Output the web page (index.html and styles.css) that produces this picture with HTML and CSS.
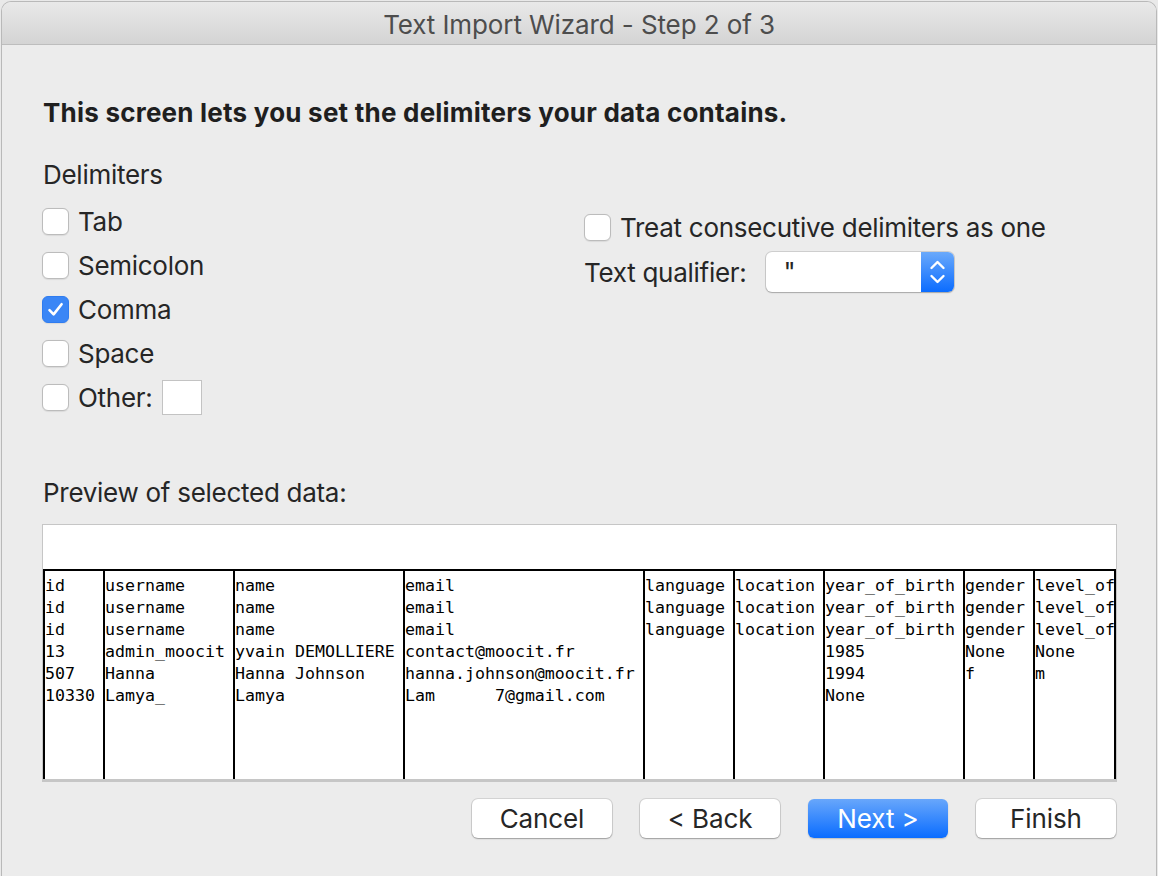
FILE: index.html
```html
<!DOCTYPE html>
<html lang="en">
<head>
<meta charset="utf-8">
<title>Text Import Wizard - Step 2 of 3</title>
<link rel="stylesheet" href="styles.css">
</head>
<body>
<div class="window">
  <div class="titlebar">Text Import Wizard - Step 2 of 3</div>
  <div class="content">
    <h1 class="heading">This screen lets you set the delimiters your data contains.</h1>
    <div class="section-label">Delimiters</div>
    <div class="options">
      <div class="left-col">
        <label class="check-row"><span class="box"></span><span>Tab</span></label>
        <label class="check-row"><span class="box"></span><span>Semicolon</span></label>
        <label class="check-row"><span class="box checked"><svg viewBox="0 0 27 27" width="27" height="27"><path d="M7.5 14.2 L11.6 18.4 L19.6 8.2" fill="none" stroke="#fff" stroke-width="2.6" stroke-linecap="round" stroke-linejoin="round"/></svg></span><span>Comma</span></label>
        <label class="check-row"><span class="box"></span><span>Space</span></label>
        <label class="check-row"><span class="box"></span><span>Other:</span><span class="other-field"></span></label>
      </div>
      <div class="right-col">
        <label class="check-row"><span class="box"></span><span>Treat consecutive delimiters as one</span></label>
        <div class="qualifier-row">
          <span>Text qualifier:</span>
          <div class="select">
            <span class="select-value">"</span>
            <span class="stepper"><svg viewBox="0 0 33 40" width="33" height="40"><path d="M10.5 16 L16.5 10 L22.5 16" fill="none" stroke="#fff" stroke-width="2.4" stroke-linecap="round" stroke-linejoin="round"/><path d="M10.5 24 L16.5 30 L22.5 24" fill="none" stroke="#fff" stroke-width="2.4" stroke-linecap="round" stroke-linejoin="round"/></svg></span>
          </div>
        </div>
      </div>
    </div>
    <div class="section-label preview-label">Preview of selected data:</div>
    <div class="preview">
      <div class="preview-head"></div>
      <div class="grid">
        <div class="col w6">id
id
id
13
507
10330</div>
        <div class="col w13">username
username
username
admin_moocit
Hanna
Lamya_</div>
        <div class="col w17">name
name
name
yvain DEMOLLIERE
Hanna Johnson
Lamya</div>
        <div class="col w24">email
email
email
contact@moocit.fr
hanna.johnson@moocit.fr
Lam      7@gmail.com</div>
        <div class="col w9">language
language
language</div>
        <div class="col w9">location
location
location</div>
        <div class="col w14">year_of_birth
year_of_birth
year_of_birth
1985
1994
None</div>
        <div class="col w7">gender
gender
gender
None
f</div>
        <div class="col w9">level_of
level_of
level_of
None
m</div>
      </div>
    </div>
    <div class="buttons">
      <button class="btn">Cancel</button>
      <button class="btn">&lt; Back</button>
      <button class="btn primary">Next &gt;</button>
      <button class="btn">Finish</button>
    </div>
  </div>
</div>
</body>
</html>
```
FILE: styles.css
```css
* { box-sizing: border-box; }
html, body { margin: 0; padding: 0; }
body {
  background: #e9e9e9;
  font-family: Inter, "Liberation Sans", sans-serif;
  color: #262626;
  width: 1158px;
  height: 876px;
  overflow: hidden;
}
.window {
  margin: 1px 1px 0 1px;
  height: 875px;
  border: 1px solid #b9b9b9;
  border-bottom: none;
  border-radius: 10px 10px 0 0;
  background: #ececec;
  overflow: hidden;
}
.titlebar {
  height: 43px;
  border-bottom: 1px solid #bdbdbd;
  background: linear-gradient(#e9e9e9, #d4d4d4);
  text-align: center;
  font-size: 26px;
  line-height: 46px;
  color: #4d4d4d;
  letter-spacing: -0.1px;
}
.content {
  padding: 0 39px 0 41px;
  letter-spacing: -0.28px;
}
.heading {
  margin: 52px 0 0 0;
  font-size: 26px;
  line-height: 32px;
  font-weight: 700;
  color: #1f1f1f;
  letter-spacing: 0.22px;
}
.section-label {
  margin-top: 30px;
  font-size: 26px;
  line-height: 32px;
}
.options {
  display: flex;
  margin-top: 8px;
}
.left-col {
  width: 542px;
  margin-left: -1px;
  display: flex;
  flex-direction: column;
}
.right-col {
  padding-top: 6px;
  display: flex;
  flex-direction: column;
}
.check-row {
  height: 44px;
  display: flex;
  align-items: center;
  gap: 9px;
  font-size: 26px;
}
.box {
  width: 27px;
  height: 27px;
  border: 1px solid #bcbcbc;
  border-radius: 6px;
  background: #fff;
  box-shadow: 0 0.5px 1px rgba(0,0,0,0.08);
  flex: none;
  display: block;
}
.box.checked {
  background: #3a86f6;
  border-color: #2f7cf0;
}
.box svg { display: block; margin: -1px; }
.other-field {
  width: 40px;
  height: 35px;
  border: 1px solid #c3c3c3;
  background: #fff;
}
.qualifier-row {
  margin-top: 3px;
  height: 40px;
  display: flex;
  align-items: center;
  font-size: 26px;
}
.select {
  margin-left: 19px;
  width: 188px;
  height: 40px;
  border-radius: 6px;
  background: #fff;
  box-shadow: 0 0 0 1px rgba(0,0,0,0.12), 0 1px 1.5px rgba(0,0,0,0.2);
  display: flex;
  overflow: hidden;
}
.select-value {
  flex: 1;
  padding-left: 18px;
  font-size: 26px;
  line-height: 40px;
}
.stepper {
  width: 33px;
  height: 40px;
  background: linear-gradient(#6aa9fb, #0b6cff);
  display: block;
}
.stepper svg { display: block; }
.preview-label {
  margin-top: 58px;
}
.preview {
  margin-top: 15px;
  margin-left: -1px;
  height: 258px;
  border: 1px solid #c6c6c6;
  border-bottom-width: 3px;
  background: #fff;
  display: flex;
  flex-direction: column;
  letter-spacing: 0;
}
.preview-head {
  height: 46px;
  border-bottom: 2px solid #000;
}
.grid {
  flex: 1;
  display: flex;
  overflow: hidden;
  border-right: 2px solid #000;
  font-family: "DejaVu Sans Mono", "Liberation Mono", monospace;
  font-size: 16.6px;
  line-height: 22px;
  color: #000;
}
.col {
  flex: none;
  border-left: 2px solid #000;
  padding-top: 4px;
  white-space: pre;
  overflow: hidden;
}
.w6 { width: 60px; }
.w7 { width: 70px; }
.w9 { width: 90px; }
.w13 { width: 130px; }
.w14 { width: 140px; }
.w17 { width: 170px; }
.w24 { width: 240px; }
.grid .col:last-child { flex: 1; }
.buttons {
  margin-top: 17px;
  display: flex;
  justify-content: flex-end;
  gap: 28px;
  padding-right: 1px;
}
.btn {
  width: 140px;
  height: 39px;
  border: none;
  border-radius: 6px;
  background: #fff;
  box-shadow: 0 0 0 1px rgba(0,0,0,0.1), 0 1px 1.5px rgba(0,0,0,0.25);
  font-family: Inter, "Liberation Sans", sans-serif;
  font-size: 26px;
  letter-spacing: -0.1px;
  color: #262626;
  padding: 0;
}
.btn.primary {
  background: linear-gradient(#68a7fb, #0a6cff);
  color: #fff;
  box-shadow: 0 1px 1.5px rgba(0,0,0,0.2);
}
```
